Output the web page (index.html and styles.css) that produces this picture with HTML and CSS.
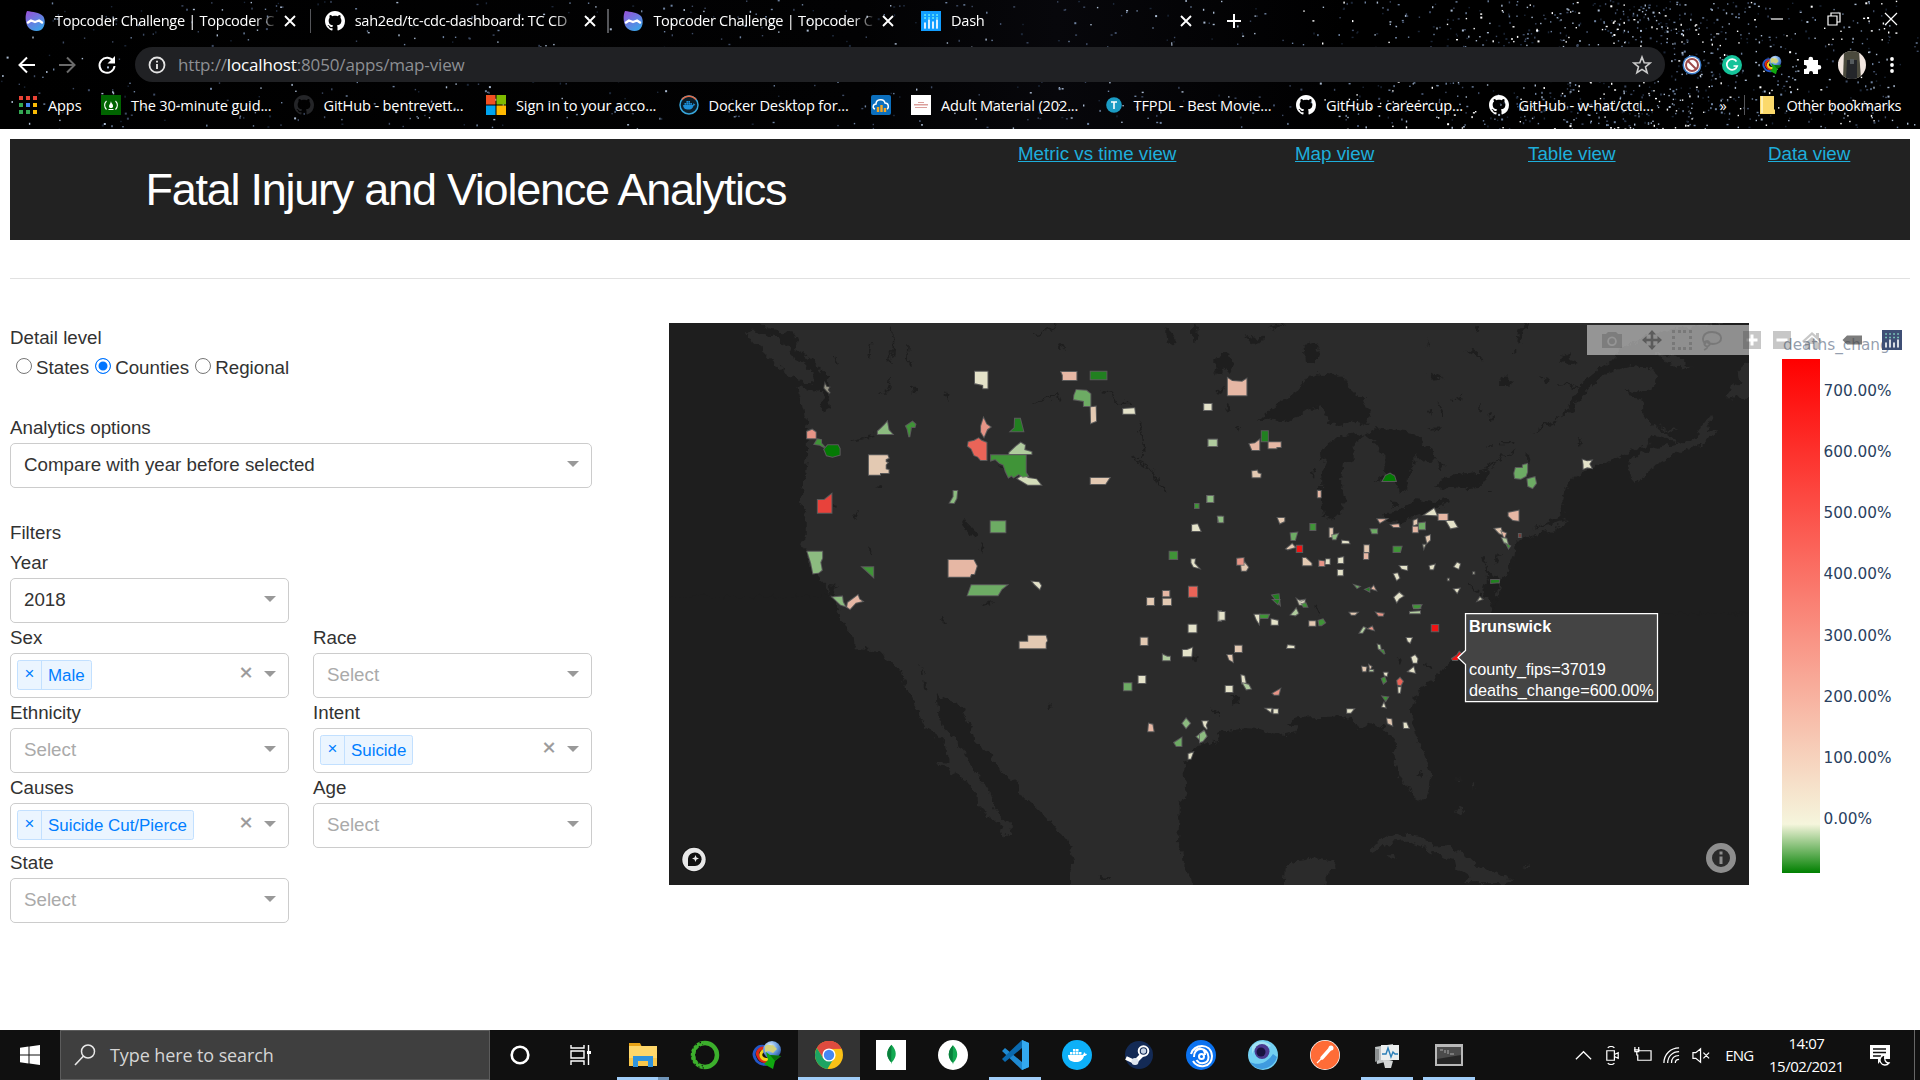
FILE: index.html
```html
<!DOCTYPE html>
<html lang="en">
<head>
<meta charset="utf-8">
<title>Dash</title>
<link rel="stylesheet" href="styles.css">
</head>
<body>
<svg width="0" height="0" class="defs">
  <defs>
    <symbol id="github" viewBox="0 0 16 16"><path d="M8 0C3.58 0 0 3.58 0 8c0 3.54 2.29 6.53 5.47 7.59.4.07.55-.17.55-.38 0-.19-.01-.82-.01-1.49-2.01.37-2.53-.49-2.69-.94-.09-.23-.48-.94-.82-1.13-.28-.15-.68-.52-.01-.53.63-.01 1.08.58 1.23.82.72 1.21 1.87.87 2.33.66.07-.52.28-.87.51-1.07-1.78-.2-3.64-.89-3.64-3.95 0-.87.31-1.59.82-2.15-.08-.2-.36-1.02.08-2.12 0 0 .67-.21 2.2.82.64-.18 1.32-.27 2-.27s1.36.09 2 .27c1.53-1.04 2.2-.82 2.2-.82.44 1.1.16 1.92.08 2.12.51.56.82 1.27.82 2.15 0 3.07-1.87 3.75-3.65 3.95.29.25.54.73.54 1.48 0 1.07-.01 1.93-.01 2.2 0 .21.15.46.55.38A8.01 8.01 0 0 0 16 8c0-4.42-3.58-8-8-8z"/></symbol>
    <linearGradient id="tcg" x1="0" y1="0" x2=".6" y2="1"><stop offset="0" stop-color="#9a4fd6"/><stop offset="1" stop-color="#3fa0e8"/></linearGradient>
    <symbol id="topcoder" viewBox="0 0 20 20"><path fill="url(#tcg)" d="M2 0c6 1 12 1 16 5 3 4 2 11-2 14-4 2-10 1-13-3C0 12 0 4 2 0z"/><path fill="none" stroke="#fff" stroke-width="2.4" stroke-linecap="round" stroke-linejoin="round" d="M3 11.500l3-2 4 1.500 4-1.500 3 2"/></symbol>
    <symbol id="close" viewBox="0 0 12 12"><path d="M1 1l10 10M11 1L1 11" stroke="#fff" stroke-width="1.900"/></symbol>
    <symbol id="whale" viewBox="0 0 20 16"><path d="M1 8h14c1 0 2-1 2-3 1 1 1 2 3 2-.5 1.500-2 2-3 2-1 4-4 6-8 6-5 0-8-2-8-7z"/><path d="M3 5h2.500v2.500H3zM6 5h2.500v2.500H6zM9 5h2.500v2.500H9zM6 2h2.500v2.500H6zM9 2h2.500v2.500H9zM12 5h2.500v2.500H12z"/></symbol>
    <radialGradient id="globe" cx=".4" cy=".3" r=".8"><stop offset="0" stop-color="#e8f4ff"/><stop offset=".5" stop-color="#6a9fe0"/><stop offset="1" stop-color="#1a3d8a"/></radialGradient>
    <symbol id="idm" viewBox="0 0 30 30"><path d="M14 7C5 4 0 12 3 18c2 5 7 7 12 6" fill="none" stroke="#2457c8" stroke-width="3"/><path d="M15 9C8 6 4 12 6 16c2 5 6 6 10 5" fill="none" stroke="#e02918" stroke-width="3"/><path d="M16 11c-5-2-8 2-7 5 1 3 4 4 8 3" fill="none" stroke="#f4d21a" stroke-width="3"/><circle cx="20" cy="10" r="9" fill="url(#globe)"/><path d="M13 6c3-3 5 0 8-1l4 4-4 4-4-2-4 1z" fill="#d2d27c"/><path d="M14 12l4 3 11 1-6 5-2 8-9-5 4-4z" fill="#10a810"/><path d="M18 15l11 1-6 5z" fill="#0a6e0a"/></symbol>
    <symbol id="leaf" viewBox="0 0 20 30"><path d="M10 1c8 9 8 17 .5 25L10 29l-.5-3C2 18 2 10 10 1z" fill="#13aa52"/><path d="M10 1c-8 9-8 17-.5 25z" fill="#0a7f3c"/></symbol>
  </defs>
</svg>

<div class="chrome">
  <svg class="stars" id="stars" width="1920" height="129"></svg>
  <div class="tabs">
    <div class="tab"><svg class="fav"><use href="#topcoder"/></svg><span class="tab-title">Topcoder Challenge | Topcoder C</span><svg class="x"><use href="#close"/></svg></div>
    <div class="tab split"><svg class="fav" fill="#fff"><use href="#github"/></svg><span class="tab-title">sah2ed/tc-cdc-dashboard: TC CD</span><svg class="x"><use href="#close"/></svg></div>
    <div class="tab split"><svg class="fav"><use href="#topcoder"/></svg><span class="tab-title">Topcoder Challenge | Topcoder C</span><svg class="x"><use href="#close"/></svg></div>
    <div class="tab"><svg class="fav" viewBox="0 0 20 20"><path fill="#119dff" d="M0 0h20v20H0z"/><path stroke="#fff" stroke-width="1.700" stroke-linecap="round" d="M4 12v5M8 9v8M12 11v6M16 9v8"/><path stroke="#8fe" stroke-width="1.500" stroke-dasharray="1.500 2.500" d="M3.300 4h15M3.300 7h15"/></svg><span class="tab-title">Dash</span><svg class="x"><use href="#close"/></svg></div>
    <svg class="plus" viewBox="0 0 16 16"><path d="M8 1v14M1 8h14" stroke="#fff" stroke-width="2"/></svg>
    <div class="wincontrols">
      <svg viewBox="0 0 14 14"><path d="M1 7h12"/></svg>
      <svg viewBox="0 0 14 14"><path d="M1 4h9v9H1zM4 4V1h9v9h-3"/></svg>
      <svg viewBox="0 0 14 14"><path d="M1 1l12 12M13 1L1 13"/></svg>
    </div>
  </div>
  <div class="toolbar">
    <svg viewBox="0 0 20 20" stroke="#fff"><path d="M18 10H3M10 2.500L2.500 10l7.500 7.500"/></svg>
    <svg viewBox="0 0 20 20" stroke="#6b6b6b"><path d="M2 10h15M10 2.500l7.500 7.500-7.500 7.500"/></svg>
    <svg viewBox="0 0 20 20" stroke="#fff"><path d="M16.500 6.500A7.500 7.500 0 1 0 17.500 11"/><path fill="#fff" stroke="none" d="M18 1v7.500h-7.500z"/></svg>
    <div class="omnibox">
      <svg viewBox="0 0 18 18"><circle cx="9" cy="9" r="7.500" fill="none" stroke="#e4e4e4" stroke-width="1.800"/><path d="M9 8v5M9 4.800v1.800" stroke="#e4e4e4" stroke-width="1.900"/></svg>
      <span class="url">http://<b>localhost</b>:8050/apps/map-view</span>
      <svg class="star" viewBox="0 0 20 20"><path fill="none" stroke="#ccc" stroke-width="1.600" d="M10 2l2.200 5.700 6 .3-4.700 3.800 1.600 5.900L10 14.400l-5.100 3.300 1.600-5.900L1.800 8l6-.3z"/></svg>
    </div>
    <div class="ext">
      <svg viewBox="0 0 20 20"><circle cx="10" cy="10" r="9.500" fill="#3a7bc8"/><circle cx="10" cy="10" r="8" fill="#fff"/><circle cx="10" cy="10" r="6" fill="none" stroke="#9b4a4a" stroke-width="2"/><path d="M6 6l8 8" stroke="#9b4a4a" stroke-width="2"/></svg>
      <svg viewBox="0 0 20 20"><circle cx="10" cy="10" r="10" fill="#15c39a"/><path d="M14.500 6.500A5.300 5.300 0 1 0 15.200 11H11.500" fill="none" stroke="#fff" stroke-width="1.700"/></svg>
      <svg><use href="#idm"/></svg>
      <svg viewBox="0 0 20 20"><path fill="#fff" d="M2 5h4.500V4a2.300 2.300 0 0 1 4.600 0v1H16v5h1a2.300 2.300 0 0 1 0 4.600h-1V19h-5v-1a2 2 0 0 0-4 0v1H2v-5h1a2 2 0 0 0 0-4H2z"/></svg>
      <svg class="avatar" viewBox="0 0 28 28"><defs><clipPath id="av"><circle cx="14" cy="14" r="14"/></clipPath></defs><g clip-path="url(#av)"><path fill="#f1e5df" d="M0 0h28v28H0z"/><path fill="#4b4a3d" d="M6 0h15l2 28H5z"/><path fill="#24262a" d="M9 9h10v19H8z"/><path fill="#555b5e" d="M12 8h4v5h-4z"/></g></svg>
      <svg viewBox="0 0 20 20" fill="#fff"><circle cx="10" cy="4" r="1.900"/><circle cx="10" cy="10" r="1.900"/><circle cx="10" cy="16" r="1.900"/></svg>
    </div>
  </div>
  <div class="bookmarks">
    <span class="bm"><svg viewBox="0 0 20 20"><path fill="#ea4335" d="M1 1h4v4H1zM8 1h4v4H8zM15 1h4v4h-4z"/><path fill="#34a853" d="M1 8h4v4H1zM1 15h4v4H1z"/><path fill="#4285f4" d="M8 8h4v4H8z"/><path fill="#34a853" d="M8 15h4v4H8z"/><path fill="#fbbc05" d="M15 8h4v4h-4zM15 15h4v4h-4z"/></svg>Apps</span>
    <span class="bm"><svg viewBox="0 0 20 20"><path fill="#006400" d="M0 0h20v20H0z"/><path fill="none" stroke="#fff" stroke-width="1.100" d="M5.500 6c-2.500 2.500-2.500 6 0 8.500M14.500 6c2.500 2.500 2.500 6 0 8.500"/><path fill="#fff" d="M10 6c0 2.500 2.500 3 2 5.500-.3 2-3.700 2-4 0-.2-1.500 1.500-2.500 2-5.500zM7.500 14h5v1h-5z"/></svg>The 30-minute guid...</span>
    <span class="bm"><svg fill="#242528"><use href="#github"/></svg>GitHub - bentrevett...</span>
    <span class="bm"><svg viewBox="0 0 20 20"><path fill="#f25022" d="M0 0h9.500v9.500H0z"/><path fill="#7fba00" d="M10.500 0H20v9.500h-9.500z"/><path fill="#00a4ef" d="M0 10.500h9.500V20H0z"/><path fill="#ffb900" d="M10.500 10.500H20V20h-9.500z"/></svg>Sign in to your acco...</span>
    <span class="bm"><svg viewBox="0 0 20 20"><circle cx="10" cy="10" r="9" fill="#0b1d28" stroke="#37a6dc" stroke-width="1.500"/><path fill="none" stroke="#e66b45" stroke-width="1.500" d="M3 4.500a9 9 0 0 1 14 0"/><use href="#whale" x="3.500" y="4.500" width="13" height="11" fill="#1d8fd8"/></svg>Docker Desktop for...</span>
    <span class="bm"><svg viewBox="0 0 20 20"><rect width="20" height="20" rx="2" fill="#0c6fbd"/><path fill="none" stroke="#fff" stroke-width="1.500" d="M4 14c-3-1-2-5 1-5 0-5 8-6 9-1 4 0 4 5 2 6"/><path stroke="#f7a823" stroke-width="2.400" d="M7 17v-5M10.500 17v-7M14 17v-4"/></svg></span>
    <span class="bm"><svg viewBox="0 0 20 20"><path fill="#fff" d="M0 0h20v20H0z"/><path fill="#dba09c" d="M3 9h14v1.600H3zM7 7h6v1H7zM4 12h12v1H4z"/></svg>Adult Material (202...</span>
    <span class="bm"><svg viewBox="0 0 20 20"><circle cx="10" cy="10" r="7.800" fill="#1b9cc4"/><path stroke="#fff" stroke-width="1.600" d="M7 7h6M10 7v7"/></svg>TFPDL - Best Movie...</span>
    <span class="bm"><svg fill="#fff"><use href="#github"/></svg>GitHub - careercup...</span>
    <span class="bm"><svg fill="#fff"><use href="#github"/></svg>GitHub - w-hat/ctci...</span>
    <span class="bm more">»</span>
    <span class="bm other"><svg viewBox="0 0 20 20"><path fill="#fbd96b" d="M3 1h14v13l1 1v4H3z"/><path fill="#fff0b0" d="M4 1h2v17H4z"/></svg>Other bookmarks</span>
  </div>
</div>

<main class="page">
  <header class="banner">
    <h1>Fatal Injury and Violence Analytics</h1>
    <nav><a>Metric vs time view</a><a>Map view</a><a>Table view</a><a>Data view</a></nav>
  </header>
  <hr>
  <div class="content">
    <section class="controls">
      <div class="line">Detail level</div>
      <div class="line radios"><i class="radio"></i>States<i class="radio on"></i>Counties<i class="radio"></i>Regional</div>
      <div class="line gap-a">Analytics options</div>
      <div class="select">Compare with year before selected<i class="arrow"></i></div>
      <div class="line gap-a">Filters</div>
      <div class="grid">
        <div><div class="line">Year</div><div class="select">2018<i class="arrow"></i></div></div><div></div>
        <div><div class="line">Sex</div><div class="select multi"><span class="tag"><b>×</b><em>Male</em></span><i class="clear">×</i><i class="arrow"></i></div></div>
        <div><div class="line">Race</div><div class="select ph">Select<i class="arrow"></i></div></div>
        <div><div class="line">Ethnicity</div><div class="select ph">Select<i class="arrow"></i></div></div>
        <div><div class="line">Intent</div><div class="select multi"><span class="tag"><b>×</b><em>Suicide</em></span><i class="clear">×</i><i class="arrow"></i></div></div>
        <div><div class="line">Causes</div><div class="select multi"><span class="tag"><b>×</b><em>Suicide Cut/Pierce</em></span><i class="clear">×</i><i class="arrow"></i></div></div>
        <div><div class="line">Age</div><div class="select ph">Select<i class="arrow"></i></div></div>
        <div><div class="line">State</div><div class="select ph">Select<i class="arrow"></i></div></div>
      </div>
    </section>
    <section class="plot">
      <svg class="map" viewBox="669 323 1080 562" width="1080" height="562">
        <defs><filter id="coast" x="0" y="0" width="1" height="1" filterUnits="objectBoundingBox" color-interpolation-filters="sRGB"><feTurbulence type="fractalNoise" baseFrequency=".14" numOctaves="3" seed="4"/><feDisplacementMap in="SourceGraphic" scale="10" xChannelSelector="R" yChannelSelector="G"/></filter></defs>
        <rect class="land" x="669" y="323" width="1080" height="562"/>
        <g filter="url(#coast)">
          <rect x="640" y="300" width="1140" height="610" fill="none"/>
          <g class="water" transform="translate(660 310) scale(.35714 .33333)">
            <path d="M-20 0H262L290 50 330 62 378 68 385 100 378 120 400 135 430 155 455 190 470 200 475 225 470 255 478 290 455 305 448 290 460 270 450 242 420 240 385 228 388 250 398 285 405 320 415 335 410 360 412 440 405 500 398 550 392 570 408 630 408 680 398 700 412 725 425 780 440 800 460 825 475 850 490 870 502 903H-20z"/>
            <path d="M845 630l15-2 12 25 20 20-14 12-20-20zM895 702l8 8-8 15-4-10zM800 240l8 12-5 18-6-14zM705 228l15 8-12 16zM550 602l6 12-4 15-5-15zM580 710l12 10-2 12-8-8zM1120 108l12-4 5 10-12 5zM1415 50l15 15 18 30-12 12-14-8zM1490 39l20 5-5 50-15 2zM1555 150h20v40h-20zM608 534l15-6 3 8-14 3zM470 825l35 4-15 5-5 20 10 8-15-5zM905 882l25-8-10 14zM940 460l15 10 8 12-12-4zM480 585l15 2-2 10z"/>
            <path class="river" d="M640 50l15 25-3 60-10 15 10 10M695 105l-4 40 10 18M590 100l-6 45M645 203l-8 45-25 5M485 135l14 25M1110 42l-40 28-20 3M1045 280l50-18 18-10 6 25M1237 242l30 5 10 30 40 0M1342 335l10 50 4 50-28 12 20 15 35 25 10 30 30 32M540 390l60-14"/>
          </g>
          <g class="water" transform="translate(660 600) scale(.35714 .33333)">
            <path d="M-20-10H488L500 25 495 45 520 85 545 110 548 148 590 150 625 170 655 190 680 220 688 260 705 290 720 330 740 380 780 410 805 440 808 485 770 482 800 505 840 530 860 545 885 580 888 615 920 650 950 670 965 710 985 700 988 682 955 650 935 620 920 570 895 530 865 490 850 450 825 415 790 380 780 350 775 284 800 298 845 315 850 340 875 390 880 425 930 470 950 510 1000 550 995 575 1040 610 1090 660 1140 725 1160 780 1145 825 1155 900H-20z"/>
            <path d="M1568 430l-38 8-30 2-20 30-15 30 3 40 10 35-6 20-17 10v45l-5 80 15 60 20 40 20 70h100V430zM725 198l20 14-5 10zM735 245l12 12 3 14-14-10zM1085 310l12 14-8-2zM780 65l12-15 12 16-12-2zM1230 830l30 3-2 8-20-2zM1540 325l25 8v14zM1490 165l14 5-2 15-12-5z"/>
          </g>
          <g class="water" transform="translate(1200 600) scale(.35714 .33333)">
            <path d="M0 435L40 425 55 400 90 390 130 385 170 388 200 400 240 405 265 400 270 380 240 370 270 355 320 352 370 350 400 348 430 362 445 388 490 368 515 385 545 420 548 470 545 490 560 530 580 560 600 590 625 605 640 580 647 540 640 500 620 440 605 400 590 350 592 320 600 290 620 262 660 235 685 200 705 180 735 165 760 140 800 100 815 50 812-10H1600V900H350L352 830 380 795 375 785 325 775 260 785 240 800 235 900H0zM605 525l13-15 10 15-10 10zM85 280l10-2 15 20 2 20-20-8zM35 325l15 8 2 12zM545 175l20 5-5 15zM625 190l20 8-4 8zM320 15l8 5 5 30-6-10z"/>
            <path class="land" d="M475 748L500 718 560 702 620 710 660 735 700 740 750 770 780 800 830 820 880 838 850 850 745 850 755 830 715 805 710 780 660 765 620 740 580 722 530 730 480 757zM720 640l10-32 10 28-10 14zM528 762l18 2-6 16zM902 797l22-4-4 10zM708 536l22 0-3 5zM763 545l5 8-4 15z"/>
          </g>
          <g class="water" transform="translate(1200 310) scale(.35714 .33333)">
            <path d="M925 372L960 345 1010 320 1030 285 1055 255 1075 215 1120 175 1160 150 1165 120 1300 60 1600 20V910H810L835 868 842 810 860 790 880 740 885 700 895 688 990 660 1035 630 990 640 930 655 950 645 1015 615 1012 580 1020 545 1040 505 1085 480 1160 445 1220 420 1260 395 1265 375 1340 400 1290 360 1265 345 1242 310 1240 270 1210 262 1195 240 1230 245 1270 230 1280 195 1250 172 1210 168 1160 180 1110 210 1080 250 1040 300 1000 330z"/>
            <path d="M162 332L200 295 270 245 300 205 330 190 400 198 410 225 440 255 458 255 460 280 475 315 470 345 440 335 380 348 350 325 340 285 310 295 270 325 220 338 200 325zM385 380L440 368 460 378 430 400 430 445 400 460 395 510 405 560 395 610 365 632 345 615 338 570 340 500 355 445 330 455 345 415zM460 375L495 355 600 370 640 410 663 450 620 455 600 430 600 460 582 505 580 540 560 550 550 525 545 500 510 515 495 510 515 490 520 440 490 400zM515 610L550 605 600 570 650 575 695 560 690 580 640 605 600 620 560 640 520 630zM655 535L680 505 740 490 790 485 808 480 808 495 790 530 740 535 700 530z"/>
            <path d="M290 105l30-5 12 20-8 40-30-5zM125 75l20 10 15 5 22-15-5 20-30 10zM45 140l25-8 25 15-10 40-20-10-25 8 10-20zM45 240l25-5-8 20-18-2zM640 190l20 2 22 12-20 6zM835 210l20-14 10 12 20 5-20 15-30 0zM955 200l20 3 5 10-14 6zM1010 145l22-20 5 25 20 8-20 8zM785 280l8 15-8 10zM70 290l15-5-5 20zM100 350l15 4-6 10zM895 60l20-21h15l-20 20-14 40-8 5zM740 125l15-3 20 5 22 28-25-20zM638 90l6 10-2 12zM770 50l12 5-5 10zM195 50l50-12-40 18zM535 575h15l4 15h-15zM1058 385l8 8-2 15zM915 430l8 5-5 30-5-10zM312 480h8v25h-6zM665 455l20 10-12 15zM635 355l40-3-10 10zM805 540l15 0-8 6zM640 300l10-4-2 25zM870 130l18-10-8 15zM700 270l10-8-3 12zM715 265l20-8-5 18zM810 320l10-8v20zM790 740l14 6-4 24 15 30 25-10-4 30-12 55-26-15-5-25 12-35zM830 735l10-4-12 30z"/>
            <path class="river" d="M800 480l30-30 55-32M805 405l15 0M840 398l40 0M1000 222l35 2 28 16M665 275l15 40M750 820l30 25 15 20"/>
            <path class="land" d="M1203 460L1225 435 1280 410 1350 400 1395 375 1420 380 1440 370 1410 402 1340 425 1290 455 1250 490 1225 522 1203 495zM1390 392L1405 345 1425 315 1432 335 1418 362 1450 368 1420 390zM1475 265L1485 235 1510 215 1505 185 1537 155 1600 140V270zM1275 128L1330 138 1380 176 1340 170 1300 152zM1280 350l60 12-20 5z"/>
          </g>
          <path class="land" d="M746 331L758 332 778 338 787 346 794 358 806 365 813 373 814 384 803 382 792 376 783 370 771 360 764 352 753 343z"/>
        </g>
        <g class="counties">
          <g transform="translate(660 310) scale(.35714 .33333)">
            <path class="cream" d="M882 185h35v50h-12v-10l-23-5zM1297 297l31-2 2 16h-33zM1523 282h21v18h-21zM1490 645l15-2 8 20h-23zM1488 748l10 0-2 12 12 14-14-4-6-12zM1043 815l18 2 6 10-4 10-14-14z"/>
            <path class="tan" d="M585 436h52l3 8-8 4v8l5 2-5 6v14l8 2v9h-24v5h-31zM1206 292l14-2 1 43-14 6zM1206 504h52l-11 18h-41zM1364 864h19v21h-19zM1408 866h23v19h-23z"/>
            <path class="peach" d="M1124 186h42v24h-38v-14zM808 750h70l9 18-7 24h-9l-3 8h-60zM526 878l28-22 4 12 8 6-18 4-16 19-8-6zM1408 843h18v16h-18z"/>
            <path class="pink" d="M412 365l14-6 10 8v18h-24zM899 348l7-23 8 18 11 8-9 7-9 22-8-14z"/>
            <path class="red" d="M864 396l16-4 12-7 8 7 14 6v52h-16l-8-10-10-4-8-20-10-8zM1481 830h23v30h-23z"/>
            <path class="red2" d="M442 570h18l20-17v55h-38z"/>
            <path class="lime" d="M978 428l18-18 14-12 12 8-2 14 20 6v6h-62z"/>
            <path class="cream lime2" d="M1002 506l18-14 10 12 24 4 12 16-36 0z"/>
            <path class="g1" d="M610 364l8-8 10-10 8-10 4 24 10 12h-40zM413 725h41v20l-5 12 4 23-9 8-15 2-6-32zM484 862l26-2 2 16 6 12-12-4zM812 578l10-18v-17h10l-2 22-7 14zM1532 558h17v18h-17zM1536 389h24v19h-24zM1563 620h8v16h-8z"/>
            <path class="g2" d="M1160 256l6-16 28 2 11 10v36h-18v-15l-28-5zM926 634h41v33h-41zM872 826h98l-14 12-10 18h-84z"/>
            <path class="g3" d="M927 436h97v52l6 10-14 2-12-8-14 10-6-6-8 6-8-18-6-20-11-5-12-12-12 4zM433 402l8-14 10 2v10l10 12-14-8zM689 348l18-13 8 8-2 8-10 0-5 30-5-25zM568 772h29v28zM1427 725h21v22h-21zM1498 582h10v12h-10z"/>
            <path class="g4" d="M1206 185h44v23h-44zM994 326h14l9 38h-34l10-10z"/>
            <path class="g5" d="M460 418l10-12h28l5 10v18l-20 6-16-4z"/>
            <path class="cream" d="M462 222l4 8 8 2-4 8 6 10-8-6-8-10z" opacity=".6"/>
          </g>
          <g transform="translate(1200 310) scale(.35714 .33333)">
            <path class="cream" d="M12 282h20v18H12zM630 614l25-18 8 20zM690 633h20l10 18-18 4zM1072 450l12 4 12-2-6 10 6 12-12-2-10 4v-12zM387 745l14-3v17h-14zM386 780h14v16h-14zM353 748h10v14h-12zM544 862l14-14 11 10-12 8-6 10zM543 792l10-2 5 14-7 6zM643 768l14-4-4 14-8 0zM712 838l14-2-6 12zM560 768h20v12l-15-4zM712 770l8-12 8 4-4 14zM398 692l18 2 2 6h-20zM278 872l12-2-2 12z"/>
            <path class="tan" d="M146 484l14-2 2 8 8 2-1 10h-22zM363 655h9v26h-9zM460 706h13v20h-13zM218 624h18l0 10-12 6zM242 716l16-14 8 10-20 6zM115 764l10-6 10 14-6 10h-12zM288 744h8l16 16v6h-24zM632 680l12-4v14l-8 8zM826 656l16-2 6 20-10-4zM598 632l10-4v14l-10 4z"/>
            <path class="peach" d="M78 205l12 8 28 2 12-8v49H78zM192 397h34v14h-12v4h-22zM139 402l15-2 12-10v30h-20zM668 612h25v18h-25zM330 543h8v19h-8zM459 730h12v17h-12zM864 608l28-6v30l-16-2-12-12zM596 650h14v17h-14zM498 628l22 0-16 10zM536 645l20-2 2 8-16 0zM480 836l6-8 6 12zM845 665l12 5-5 14z"/>
            <path class="pink" d="M104 746l18-2v20h-18zM334 752l14 2v14h-14z"/>
            <path class="hot" d="M271 707h15v19h-15z"/>
            <path class="lime" d="M24 389h23v19H24zM846 684l12 2 4 16-10-4z"/>
            <path class="g1" d="M21 558h16v18H21zM50 620h15v17H54zM370 676l16-4-6 16-8 0z"/>
            <path class="g2" d="M880 490l4-16h20v-8l12-4v24l-4 12-14 8-16-2zM917 508l20-6 4 18-10 14-12-6zM613 640l17-2v20h-17zM478 658h18v12h-14zM254 670l18-2-6 22h-10zM434 826l12 4-6 4z"/>
            <path class="g3" d="M542 710l22 0-4 16h-18zM309 642h14v18h-14zM597 888l20-2v8h-18zM858 702l10 6-4 6z"/>
            <path class="g4" d="M173 364h17v30h-17zM203 856l17-3 3 29zM815 810l22 0v7l-22 2zM464 838l10-4v10z"/>
            <path class="g5" d="M512 513l8-16 12-6 12 8 4 14z"/>
            <path class="cream" d="M272 868l12 8 10-6-2 16-14-2zM778 872l6-10 6 6zM765 787h3v4h-3zM694 806h3v5h-3zM625 704l6 0-4 10z" opacity=".8"/>
            <path class="g3" d="M286 882l10-2 4 10-10 0z"/>
            <path class="darkred" d="M893 672h5v9h-5z"/>
          </g>
          <g transform="translate(660 600) scale(.35714 .33333)">
            <path class="tan" d="M1007 125h24v-18h49l4 15-4 6v17h-73zM1346 113h19v22h-19z"/>
            <path class="cream" d="M1480 74h22v23h-22zM1464 150h12l14-6-2 25h-24zM1340 228h19v21h-19zM1519 364h14l-5 12 4 12-9-10zM1480 462l12-4-6 18-6 0zM1563 34h8v28h-8z"/>
            <path class="lime" d="M1408 164l12 6 8 0v11h-20z"/>
            <path class="peach" d="M1369 371l10 3 3 20h-15z"/>
            <path class="g2" d="M1299 250h21v21h-21zM1440 428l20-14v14l0 10h-14z"/>
            <path class="g1" d="M1463 370l10-14 11 14-11 14zM1503 410l18-16 2 12 6 4-12 14z"/>
          </g>
          <g transform="translate(1200 600) scale(.35714 .33333)">
            <path class="cream" d="M54 36h15v23H54zM153 44l14 0-2 26-6-10zM200 58l18 4v12h-18zM246 136l18 2v6h-20zM592 172l10-6 7 10-2 12-10 0zM579 114l14 0-5 14-6-4zM584 214l14-12 4 16zM72 258h19v18H72zM116 226l8 2 4 20-10 2zM186 326h14l-2 10zM206 328l12 0v12h-12zM412 328h18l-8 10h-10zM570 368l8 0 6 16h-13zM510 320l5-10 4 12zM515 218h10l-2 10-6-2zM555 262h7l-2 16h-4z"/>
            <path class="tan" d="M306 64h17v13h-17zM98 137h19v19H98zM77 165l13 0 2 20-10-6zM454 200l12 2-2 12h-8zM420 38h20l-6 6h-10zM524 356l12 2 2 18-12-6zM474 196l6 4-4 8z"/>
            <path class="pink" d="M494 38l20 3-2 6h-12zM204 280l20-12-4 16h-12zM472 86l10-6 4 10z"/>
            <path class="red" d="M552 242l8-8 8 10-6 12-8-2z"/>
            <path class="hot" d="M649 75h18v19h-18zM706 176l14-10 6-10 6 6-12 18h-12z"/>
            <path class="g3" d="M168 44l25 0-4 10h-20zM332 62l12-4 6 10-10 8-6 0zM597 16l22 0-6 9h-14zM509 236l8-4 4 12-7 6zM512 290l14 2-6 10zM505 150l8 0 4 12z"/>
            <path class="lime" d="M255 44l10-12 4-6 6 14-8 6zM588 36l28-2v6h-28zM120 250l16 4 6 12-12 2zM448 98l10-16 5 2-8 14zM475 210l10 0v4h-10zM498 134l6 2 2 12-6-2z"/>
            <path class="g1" d="M0 402l12-8 6 14-10 14-8 4z"/>
            <path class="g4" d="M206 0h16l-4 12z"/>
          </g>
        </g>
        <path class="hoverbox" d="M1458 657.500L1465.500 650.500V613.500H1657.500V701.500H1465.500V664.500z"/>
        <g class="hovertext">
          <text x="1469" y="632" font-weight="bold">Brunswick</text>
          <text x="1469" y="675">county_fips=37019</text>
          <text x="1469" y="696">deaths_change=600.00%</text>
        </g>
        <circle cx="694" cy="859.500" r="12.500" fill="#111"/><circle cx="694" cy="859.500" r="11.700" fill="#e8e8e8"/>
        <path fill="#111" d="M688 866v-7.500a6.800 6.800 0 1 1 7 7.500z"/><path fill="#e8e8e8" d="M695.500 855l1 2.500 2.500 1-2.500 1-1 2.500-1-2.500-2.500-1 2.500-1z"/>
        <circle cx="1721" cy="858" r="12" fill="#2b2b2b" stroke="#8e8e8e" stroke-width="6"/><path stroke="#8e8e8e" stroke-width="3" d="M1721 856.500v7.500M1721 851.500v3"/>
      </svg>
      <div class="legend">
        <div class="legend-title">deaths_change</div>
        <div class="legend-body">
          <div class="bar"></div>
          <div class="ticks"><span>700.00%</span><span>600.00%</span><span>500.00%</span><span>400.00%</span><span>300.00%</span><span>200.00%</span><span>100.00%</span><span>0.00%</span></div>
        </div>
      </div>
      <svg class="modebar" width="323" height="30" viewBox="0 0 323 30">
        <path fill="#fff" fill-opacity=".5" d="M0 0h323v30H0z"/>
        <g fill="#444" fill-opacity=".3">
          <path fill-rule="evenodd" d="M15 9h4l2-2h8l2 2h4v14H15zM25 11.500a4.800 4.800 0 1 0 .01 0z"/><circle cx="25" cy="16.300" r="3"/>
          <path d="M85 5h3v3h-3zM91 5h3v3h-3zM96 5h3v3h-3zM102 5h3v3h-3zM85 11h3v3h-3zM102 11h3v3h-3zM85 17h3v3h-3zM102 17h3v3h-3zM85 22h3v3h-3zM91 22h3v3h-3zM96 22h3v3h-3zM102 22h3v3h-3z"/>
          <path fill-rule="evenodd" d="M156 6h18v18h-18zM163.500 9.500v4h-4v3h4v4h3v-4h4v-3h-4v-4z"/>
          <path fill-rule="evenodd" d="M186 6h18v18h-18zM189.500 13.500v3h11v-3z"/>
          <path d="M215 16l10-9 4 3.500V8h3v5l3 3-1.500 1.500L225 10l-8.500 7.500zM218 18l7-6 7 6v6h-5v-5h-4v5h-5z"/>
        </g>
        <path fill="#444" fill-opacity=".7" d="M65 5l4 4.500h-2.700v4.200h4.200V11l4.500 4-4.500 4v-2.700h-4.200v4.200H69L65 25l-4-4.500h2.700v-4.200h-4.200V19L55 15l4.500-4v2.700h4.200V9.500H61zM255.500 15l4.500-4.500h15v9h-15z"/>
        <path fill="none" stroke="#444" stroke-opacity=".3" stroke-width="1.900" d="M119 19c-5-3-4-12 6-12 12 0 12 12 1 12-3 0-5-1-7-3m1 0a2.700 2.700 0 1 0 .1 0m0 5c1 2-1 3-3 4"/>
        <path fill="#3f4f75" d="M295 5h20v20h-20z"/><path stroke="#fff" stroke-width="1.600" stroke-linecap="round" d="M299 18v4M303 15v7M307 18v4M311 15v7"/><path stroke="#80cfbe" stroke-width="1.700" stroke-dasharray="1.700 2.300" d="M298.200 9h14.500M298.200 12.500h14.500"/>
      </svg>
    </section>
  </div>
</main>

<footer class="taskbar">
  <div class="start"><svg width="20" height="20" viewBox="0 0 20 20"><path fill="#fff" d="M0 2.800L8.500 1.600v8H0zM9.500 1.500L20 0v9.600H9.500zM0 10.500h8.500v8L0 17.300zM9.500 10.500H20V20L9.500 18.600z"/></svg></div>
  <div class="search"><svg width="22" height="22" viewBox="0 0 22 22"><circle cx="14" cy="7.500" r="6.500" fill="none" stroke="#e8e8e8" stroke-width="1.500"/><path d="M9.500 12L1 21" stroke="#e8e8e8" stroke-width="1.600"/></svg>Type here to search</div>
  <div class="apps">
    <div><svg viewBox="0 0 30 30"><circle cx="15" cy="15" r="8.300" fill="none" stroke="#fff" stroke-width="2.600"/></svg></div>
    <div><svg viewBox="0 0 30 30"><path d="M5 5v3h13V5M5 25v-4h13v4M5 11h13v7H5zM22.500 5v20" fill="none" stroke="#fff" stroke-width="1.400"/><path fill="#fff" d="M21 11h4v3h-4z"/></svg></div>
    <div class="open two"><svg viewBox="0 0 30 30"><path fill="#e8a317" d="M1 3h11l2 4H1z"/><path fill="#ffd76a" d="M1 6h28v20H1z"/><path fill="#f8c64a" d="M1 18h28v8H1z"/><path fill="#2f93dd" d="M5 16h20v11h-5v-6H10v6H5z"/></svg></div>
    <div><svg viewBox="0 0 30 30"><circle cx="15" cy="15" r="12" fill="none" stroke="#3caf2c" stroke-width="4.500"/><path fill="none" stroke="#101010" stroke-width="1.100" stroke-dasharray="1.500 3" d="M14 28A13 13 0 0 1 14 2M13 26A11.500 11.500 0 0 1 13 4.500"/></svg></div>
    <div><svg><use href="#idm"/></svg></div>
    <div class="active"><svg viewBox="0 0 30 30"><circle cx="15" cy="15" r="14" fill="#fbc116"/><path fill="#de4b3f" d="M2.900 8A14 14 0 0 1 27.500 8.800L15 9z"/><path fill="#de4b3f" d="M2.900 8L9 18l6-9.500 12.300-.2A14 14 0 0 0 2.900 8z"/><path fill="#1da462" d="M2.900 8a14 14 0 0 0 10.500 21l6.600-11-11 0z"/><circle cx="15" cy="15" r="6.600" fill="#fff"/><circle cx="15" cy="15" r="5.200" fill="#4587f3"/></svg></div>
    <div><svg viewBox="0 0 30 30"><path fill="#fff" d="M0 0h30v30H0z"/><use href="#leaf" x="8" y="4" width="15" height="21"/></svg></div>
    <div><svg viewBox="0 0 30 30"><circle cx="15" cy="15" r="15" fill="#fff"/><use href="#leaf" x="8" y="4" width="14" height="22"/></svg></div>
    <div class="open"><svg viewBox="0 0 30 30"><path fill="#1f8ad2" d="M22 0l7 3v24l-7 3L2 11l3-3 17 14z"/><path fill="#0a6ab0" d="M22 0v8L5 22l-3-3z"/><path fill="#33a9f0" d="M22 0l7 3v24l-7 3z"/></svg></div>
    <div><svg viewBox="0 0 30 30"><circle cx="15" cy="15" r="15" fill="#0db0f8"/><use href="#whale" x="5" y="7" width="20" height="16" fill="#fff"/></svg></div>
    <div><svg viewBox="0 0 30 30"><circle cx="15" cy="15" r="14" fill="#132a55"/><path d="M2 18l9 4 8-8" stroke="#fff" stroke-width="4" fill="none"/><circle cx="19.500" cy="11" r="4.800" fill="#132a55" stroke="#fff" stroke-width="2"/><circle cx="19.500" cy="11" r="2.700" fill="#c8d4e4"/><circle cx="11" cy="21.500" r="3.500" fill="#dfe6ef"/></svg></div>
    <div><svg viewBox="0 0 30 30"><circle cx="15" cy="15" r="15" fill="#0a72f0"/><g fill="none" stroke="#fff" stroke-width="2"><circle cx="15.500" cy="16.500" r="2.500"/><path d="M5 14C7 4 25 2 26 16c0 12-15 13-19 5M8 17c-1-10 14-11 14.500 0 0 7-9 8-12 3M9 11c5-5 10-2 10 4"/></g></svg></div>
    <div><svg viewBox="0 0 30 30"><circle cx="15" cy="15" r="15" fill="#73d0f2"/><path fill="#3f9bdf" d="M2 22c8 4 17 1 23-8l4 3c-3 12-19 17-27 5z"/><path fill="#a1e2f4" d="M4 6c5-6 14-6 19 0l-4 2C13 3 8 5 4 14z"/><circle cx="14" cy="11.500" r="7.500" fill="#4a3a90"/><circle cx="13" cy="12" r="4.500" fill="#18123f"/></svg></div>
    <div><svg viewBox="0 0 30 30"><circle cx="15" cy="15" r="15" fill="#fff"/><circle cx="15" cy="15" r="14.300" fill="#ff6c37"/><path stroke="#fff" stroke-width="3.500" stroke-linecap="round" d="M12 18l8-9"/><path stroke="#fff" stroke-width="1.200" d="M7 23l7-7"/><circle cx="21" cy="8" r="2.500" fill="#fff"/></svg></div>
    <div class="open"><svg viewBox="0 0 30 30"><path fill="#bfc3c4" d="M3 7l18-3v16l-16 4z"/><path fill="#ecefef" d="M9 5h18v15H9z"/><path fill="none" stroke="#2a7fb8" stroke-width="1.400" d="M10 14h4l2-6 3 9 2-5 2 2h3"/><path fill="#d4d6d6" d="M11 20l10 1-2 7h-6z"/><path fill="#8b8f90" d="M3 9h4v11l-4 2z"/></svg></div>
    <div class="open"><svg viewBox="0 0 30 30"><path fill="#b9b9b9" d="M1 4h28v22H1z"/><path fill="#262626" d="M3 7h24v17H3z"/><path fill="#4b4b4b" d="M3 7h24v8L3 19z"/><path d="M6 10h3m2 0v3m3-3v4m2 0h4" stroke="#aaa" stroke-width="1"/></svg></div>
  </div>
  <div class="tray">
    <svg viewBox="0 0 20 20"><path d="M2 14l8-8 8 8"/></svg>
    <svg viewBox="0 0 20 20"><path d="M4 5h8v10H4zM12 9l4-2v6l-4-2M5 2c2-2 5-2 7 0M5 18c2 2 5 2 7 0"/></svg>
    <svg viewBox="0 0 20 20"><path d="M5 5h14v10H5V9M1 4h6M2 1v5h4V1M4 6v4"/></svg>
    <svg viewBox="0 0 20 20"><path d="M2 18C2 9 9 2 18 2M6 18c0-7 5-12 12-12M10 18c0-5 3-8 8-8M14 18c0-3 1-4 4-4"/></svg>
    <svg viewBox="0 0 20 20"><path d="M1 7h3l5-4v14l-5-4H1zM12 7l6 6M18 7l-6 6"/></svg>
    <span class="lang">ENG</span>
    <span class="clock">14:07<br>15/02/2021</span>
    <svg class="note" viewBox="0 0 22 22"><path fill="#fff" stroke="none" d="M1 1h20v14h-8l-4 5v-5H1z"/><path stroke="#101010" d="M4 5h13M4 8.500h13M4 12h8"/><path fill="#101010" stroke="#fff" d="M16 11a5 5 0 1 0 4 8c-4 0-5-4-4-8z"/></svg>
    <i class="peek"></i>
  </div>
</footer>
<script src="stars.js"></script>
</body>
</html>
```
FILE: styles.css
```css
* { box-sizing: border-box; }
body { margin: 0; width: 1920px; height: 1080px; overflow: hidden; background: #fff; display: flex; flex-direction: column; font-family: "Liberation Sans", Arial, sans-serif; font-size: 18.75px; line-height: 30px; color: #323232; }
.defs { position: absolute; }
svg { display: block; flex: none; }
i, em { font-style: normal; }

/* browser frame */
.chrome { position: relative; height: 129px; flex: none; background: linear-gradient(90deg, #000 0, #020203 45%, #07070b 55%, #000 70%); color: #fff; font-family: "Open Sans", "Noto Sans", sans-serif; font-size: 14.6px; letter-spacing: -.15px; overflow: hidden; }
.stars { position: absolute; left: 0; top: 0; }
.tabs, .toolbar, .bookmarks { position: relative; display: flex; align-items: center; }
.tabs { height: 41px; padding-left: 11px; letter-spacing: -.3px; }
.tab { width: 298.700px; height: 24px; display: flex; align-items: center; padding-left: 14px; flex: none; position: relative; }
.tab.split { border-left: 1px solid #55565a; border-right: 1px solid #55565a; }
.tab.split + .split { border-right: 0; }
.tab .fav { width: 20px; height: 20px; margin-right: 10px; }
.tab-title { width: 220px; white-space: nowrap; padding-bottom: 1px; -webkit-mask-image: linear-gradient(90deg, #000 90%, rgba(0,0,0,.2) 100%); mask-image: linear-gradient(90deg, #000 90%, rgba(0,0,0,.2) 100%); }
.tab .x { width: 12px; height: 12px; margin-left: 9px; }
.plus { width: 16px; height: 16px; margin-left: 20px; }
.wincontrols { margin-left: auto; margin-right: 22px; display: flex; gap: 43px; padding-bottom: 4px; }
.wincontrols svg { width: 14px; height: 14px; fill: none; stroke: #fff; stroke-width: 1.2; }
.toolbar { height: 47px; padding-left: 17px; }
.toolbar > svg { width: 20px; height: 20px; margin-right: 20px; fill: none; stroke-width: 2; }
.toolbar > svg:nth-child(3) { margin-right: 18px; }
.omnibox { width: 1530px; height: 35px; border-radius: 18px; background: #202124; display: flex; align-items: center; padding: 0 13px; flex: none; }
.omnibox svg { width: 18px; height: 18px; }
.omnibox .star { width: 20px; height: 20px; margin-left: auto; }
.url { margin-left: 12px; color: #8d8f93; font-size: 17px; letter-spacing: -.15px; }
.url b { color: #fff; font-weight: 400; }
.ext { display: flex; align-items: center; margin-left: 17px; gap: 20px; }
.ext svg { width: 20px; height: 20px; }
.ext .avatar { width: 28px; height: 28px; margin: 0 -4px; }
.bookmarks { height: 33px; display: grid; grid-template-columns: 83px 192.500px 192.500px 192.500px 192.500px 40px 192.500px 192.500px 192.500px 231px 24px 1fr; padding-left: 18px; }
.bm { display: flex; align-items: center; gap: 10px; white-space: nowrap; }
.bm svg { width: 20px; height: 20px; }
.bm.other { border-left: 1px solid #55565a; height: 20px; padding-left: 12px; letter-spacing: -.35px; }

/* page */
.page { flex: 1; padding: 10px 10px 0; }
.banner { height: 101px; background: #222; display: flex; }
h1 { margin: 24px 0 0 135.500px; width: 873.500px; font-size: 45px; line-height: 54px; font-weight: 300; letter-spacing: -1.25px; color: #fff; }
nav { display: grid; grid-template-columns: 277px 233px 240px 142px; height: 30px; }
nav a { color: #1eaedb; text-decoration: underline; }
hr { border: 0; border-top: 1px solid #e1e1e1; margin: 38px 0 44px; }
.content { display: flex; }
.controls { width: 582px; margin-right: 77px; flex: none; }
.line { height: 30px; white-space: nowrap; }
.gap-a { margin-top: 30px; }
.radios { display: flex; padding-left: 6px; }
.radio { width: 16px; height: 16px; border: 1px solid #767676; border-radius: 50%; margin: 5px 4px 0 0; }
.radio:not(:first-child) { margin-left: 6px; }
.radio.on { border-color: #0075ff; background: #0075ff; box-shadow: inset 0 0 0 2.500px #fff; }
.select { position: relative; height: 45px; border: 1px solid #ccc; border-radius: 5px; padding: 0 12.500px 0 13px; line-height: 42.500px; display: flex; align-items: center; color: #333; }
.select.ph { color: #aaa; }
.arrow { margin-left: auto; margin-top: -3px; border: 6.500px solid transparent; border-top-color: #999; border-bottom: 0; }
.grid { display: grid; grid-template-columns: 279px 279px; column-gap: 24px; }
.multi { padding-left: 6px; align-items: flex-start; }
.multi .arrow { margin: 17px 0 0; }
.tag { display: flex; height: 30px; margin-top: 6px; border: 1px solid #c2e0ff; border-radius: 2.500px; background: #ebf5ff; color: #007eff; font-size: 16.900px; line-height: 29px; }
.tag b { width: 24px; font-weight: 400; text-align: center; border-right: 1px solid #c2e0ff; line-height: 25px; }
.tag em { padding: 0 6px; }
.clear { margin-left: auto; margin-right: 11px; color: #999; font-size: 22.500px; line-height: 37px; width: 13px; height: 42px; -webkit-text-stroke: .4px #999; }

/* choropleth */
.plot { position: relative; display: flex; width: 1241px; height: 562px; }
.land { fill: #2b2b2b; }
.water path { fill: #1e1e1e; }
.water path.land { fill: #2b2b2b; }
.water path.river { fill: none; stroke: #1e1e1e; stroke-width: 4; }
.counties path { stroke: #666; stroke-opacity: .8; stroke-width: 2; paint-order: stroke; vector-effect: non-scaling-stroke; }
.cream { fill: #e4e2c9; }
.lime2 { fill: #d3dcb9; }
.tan { fill: #e3c9b2; }
.peach { fill: #e6b7a4; }
.pink { fill: #e69486; }
.red { fill: #ea6458; }
.red2 { fill: #e8423b; }
.hot { fill: #f01414; }
.darkred { fill: #7c3a35; }
.lime { fill: #b0cb9e; }
.g1 { fill: #8cbb80; }
.g2 { fill: #6dab64; }
.g3 { fill: #409438; }
.g4 { fill: #218020; }
.g5 { fill: #047a04; }
.hoverbox { fill: #444; stroke: #fff; stroke-width: 1.250; }
.hovertext { fill: #fff; font-size: 16.250px; }
.legend { padding-left: 33px; font-family: "DejaVu Sans", Verdana, sans-serif; color: #2a3f5f; font-size: 15.300px; }
.legend-title { height: 36px; line-height: 44px; padding-left: 1px; }
.legend-body { display: flex; }
.bar { width: 38px; height: 514px; background: linear-gradient(180deg, red 0, #f5f5dc 90.500%, green 100%); }
.ticks { display: flex; flex-direction: column; padding: 2px 0 0 3.500px; }
.ticks span { height: 61.150px; line-height: 61.150px; }
.modebar { position: absolute; left: 918px; top: 2px; }

/* taskbar */
.taskbar { height: 50px; flex: none; background: #101010; display: flex; color: #fff; font-family: "Open Sans", "Noto Sans", sans-serif; }
.start { width: 60px; display: flex; align-items: center; justify-content: center; }
.search { width: 430px; background: #3f3f3f; border: 1px solid #5c5c5c; display: flex; align-items: center; gap: 14px; padding-left: 13px; font-size: 18px; letter-spacing: -.1px; color: #d5d5d5; }
.apps { display: flex; }
.apps div { width: 62px; display: flex; align-items: center; justify-content: center; position: relative; }
.apps div:first-child { width: 60px; }
.apps div:nth-child(2) { width: 62px; }
.apps svg { width: 30px; height: 30px; }
.apps .active { background: #333; }
.open::after, .active::after { content: ""; position: absolute; bottom: 0; left: 5px; right: 5px; height: 3px; background: #a0cdf8; }
.active::after { left: 0; right: 0; }
.two::after { background: linear-gradient(90deg, #a0cdf8 79%, #6f94b8 79%); }
.tray { flex: 1; display: flex; align-items: center; justify-content: flex-end; gap: 10.500px; font-size: 15px; line-height: 23px; }
.tray svg { width: 19px; height: 19px; fill: none; stroke: #fff; stroke-width: 1.300; }
.tray .note { width: 22px; height: 22px; margin-left: 14px; }
.lang { letter-spacing: -.8px; margin-left: 4px; }
.clock { text-align: center; margin-left: 5px; letter-spacing: -.45px; }
.peek { width: 1px; height: 50px; background: #666; margin-left: 13px; margin-right: 5px; }
```
FILE: stars.js
```js
// Fills the browser theme strip with a fixed star field, denser towards the right.
(function () {
  var seed = 20210215;
  function rnd() {
    seed = (seed * 1664525 + 1013904223) % 4294967296;
    return seed / 4294967296;
  }
  var svg = document.getElementById('stars');
  var tones = ['#1c2738', '#3d4a63', '#6d819f', '#a9b9cf', '#ffffff'];
  for (var i = 0; i < 1800; i++) {
    var x = i < 900 ? rnd() * 1920 : 1340 + rnd() * 560;
    if (i > 1400) x = 1620 + (rnd() + rnd() - 1) * 200;
    var y = rnd() * 129;
    var limit = x > 1300 ? 5 : 4;
    var tone = tones[Math.floor(Math.pow(rnd(), 1.1) * limit)];
    var r = document.createElementNS('http://www.w3.org/2000/svg', 'rect');
    r.setAttribute('x', x.toFixed(1));
    r.setAttribute('y', y.toFixed(1));
    r.setAttribute('width', rnd() > 0.7 ? 2 : 1.4);
    r.setAttribute('height', rnd() > 0.7 ? 2 : 1.4);
    r.setAttribute('fill', tone);
    svg.appendChild(r);
  }
})();
```
